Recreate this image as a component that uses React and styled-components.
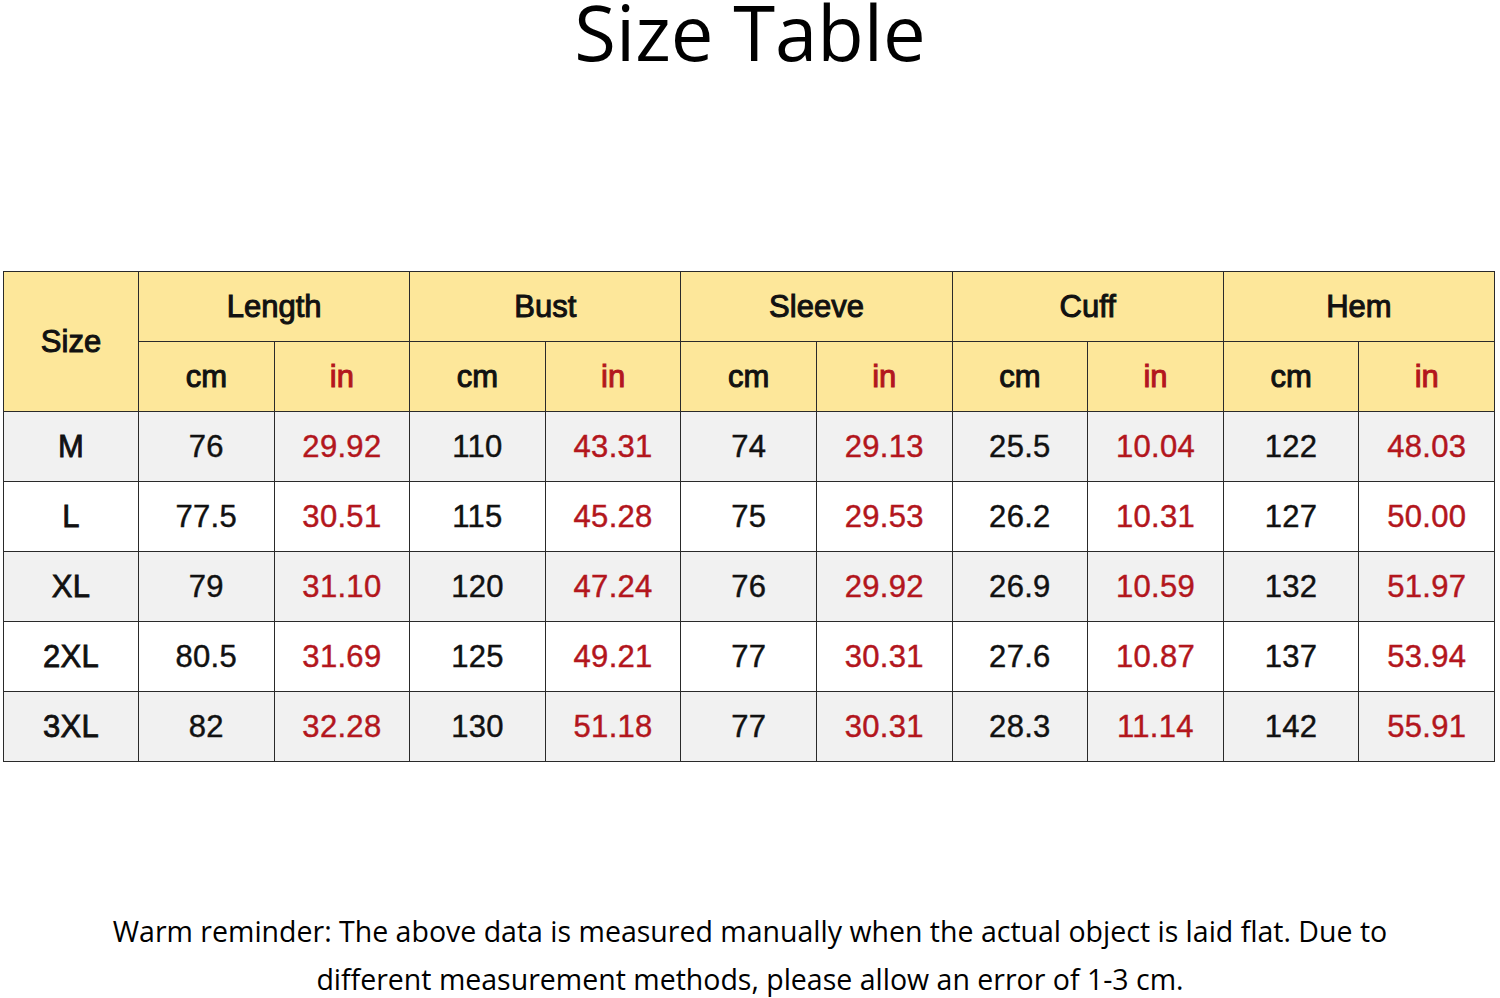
import React from 'react'
import styled, { createGlobalStyle } from 'styled-components'

const GlobalStyle = createGlobalStyle`
  html, body {
    margin: 0;
    padding: 0;
    background: #fff;
  }
`

const Page = styled.div`
  width: 1500px;
  height: 998px;
  overflow: hidden;
  background: #fff;
  display: flex;
  flex-direction: column;
`

const Title = styled.h1`
  margin: 0;
  height: 68px;
  line-height: 68px;
  text-align: center;
  font-family: "Open Sans", "Noto Sans", sans-serif;
  font-weight: 400;
  font-size: 76px;
  color: #000;
  margin-top: -2px;
`

const TableWrap = styled.div`
  margin-top: 205px;
  padding-left: 3px;
`

const Table = styled.table`
  border-collapse: collapse;
  table-layout: fixed;
  width: 1491px;
  font-family: "Liberation Sans", Arial, sans-serif;
  font-size: 31px;
  color: #111;
`

const Head = styled.th`
  background: #fde79a;
  border: 1.5px solid #2a2a2a;
  height: 69px;
  padding: 0;
  font-weight: 400;
  -webkit-text-stroke: 1px currentColor;
  color: ${props => props.red ? '#b3161d' : '#111'};
  text-align: center;
`

const Row = styled.tr`
  background: ${props => props.shade ? '#f1f1f1' : '#ffffff'};
`

const Cell = styled.td`
  border: 1.5px solid #2a2a2a;
  height: 69px;
  padding: 0;
  text-align: center;
  letter-spacing: 0.3px;
  font-weight: 400;
  -webkit-text-stroke: ${props => props.bold ? '0.8px' : '0.45px'} currentColor;
  color: ${props => props.red ? '#b3161d' : '#111'};
`

const Note = styled.p`
  margin: 145px 0 0;
  text-align: center;
  font-family: "Open Sans", "Noto Sans", sans-serif;
  font-size: 28.5px;
  line-height: 48px;
  color: #000;
`

const groups = ['Length', 'Bust', 'Sleeve', 'Cuff', 'Hem']

const rows = [
  ['M', '76', '29.92', '110', '43.31', '74', '29.13', '25.5', '10.04', '122', '48.03'],
  ['L', '77.5', '30.51', '115', '45.28', '75', '29.53', '26.2', '10.31', '127', '50.00'],
  ['XL', '79', '31.10', '120', '47.24', '76', '29.92', '26.9', '10.59', '132', '51.97'],
  ['2XL', '80.5', '31.69', '125', '49.21', '77', '30.31', '27.6', '10.87', '137', '53.94'],
  ['3XL', '82', '32.28', '130', '51.18', '77', '30.31', '28.3', '11.14', '142', '55.91']
]

export default function App () {
  return (
    <Page>
      <GlobalStyle/>
      <Title>Size Table</Title>
      <TableWrap>
        <Table>
          <colgroup>
            <col style={{ width: 135 }}/>
            {Array.from({ length: 10 }).map((_, i) => <col key={i} style={{ width: 135.6 }}/>)}
          </colgroup>
          <thead>
            <tr>
              <Head rowSpan={2}>Size</Head>
              {groups.map(g => <Head key={g} colSpan={2}>{g}</Head>)}
            </tr>
            <tr>
              {groups.map(g => (
                <React.Fragment key={g}>
                  <Head>cm</Head>
                  <Head red>in</Head>
                </React.Fragment>
              ))}
            </tr>
          </thead>
          <tbody>
            {rows.map((r, i) => (
              <Row key={r[0]} shade={i % 2 === 0}>
                {r.map((v, j) => (
                  <Cell key={j} bold={j === 0} red={j > 0 && j % 2 === 0}>{v}</Cell>
                ))}
              </Row>
            ))}
          </tbody>
        </Table>
      </TableWrap>
      <Note>
        Warm reminder: The above data is measured manually when the actual object is laid flat. Due to<br/>
        different measurement methods, please allow an error of 1-3 cm.
      </Note>
    </Page>
  )
}
